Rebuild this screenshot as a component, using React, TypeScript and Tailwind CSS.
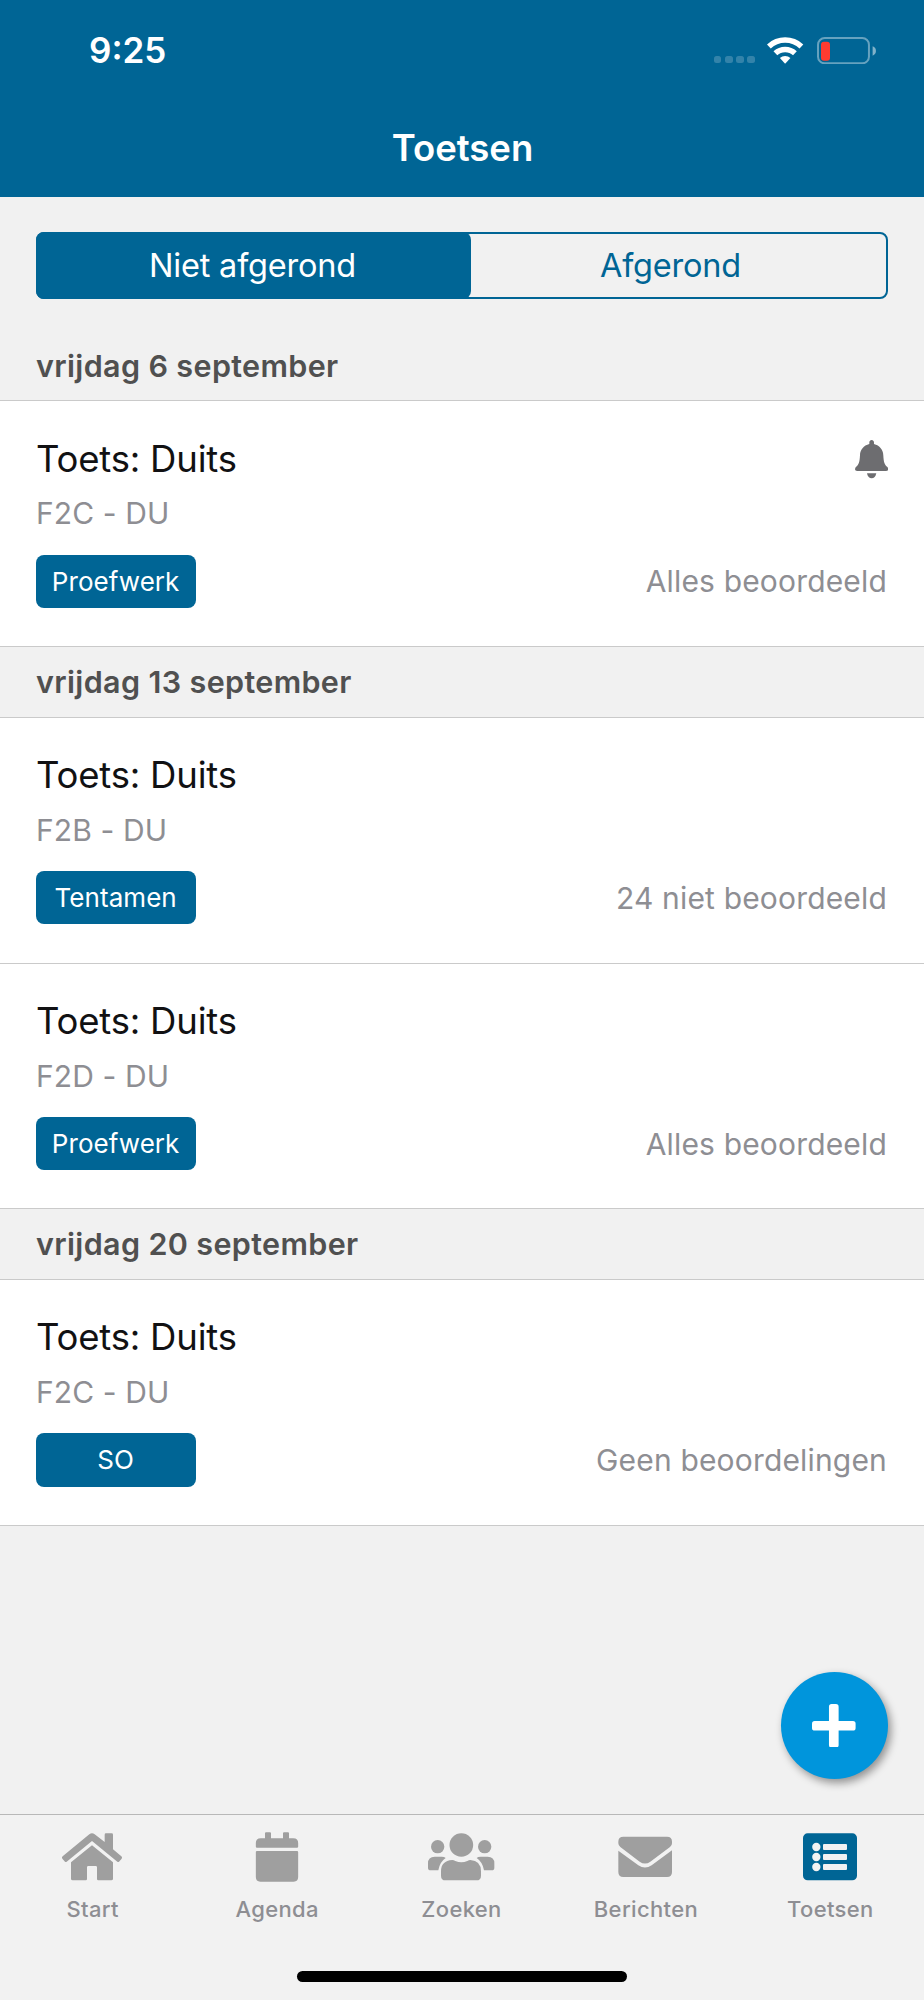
import { useState } from "react";
import type { ReactNode } from "react";

type TTest = {
  title: string;
  group: string;
  type: string;
  status: string;
  reminder?: boolean;
};

type TDay = {
  date: string;
  tests: TTest[];
};

const days: TDay[] = [
  {
    date: "vrijdag 6 september",
    tests: [
      { title: "Toets: Duits", group: "F2C - DU", type: "Proefwerk", status: "Alles beoordeeld", reminder: true },
    ],
  },
  {
    date: "vrijdag 13 september",
    tests: [
      { title: "Toets: Duits", group: "F2B - DU", type: "Tentamen", status: "24 niet beoordeeld" },
      { title: "Toets: Duits", group: "F2D - DU", type: "Proefwerk", status: "Alles beoordeeld" },
    ],
  },
  {
    date: "vrijdag 20 september",
    tests: [
      { title: "Toets: Duits", group: "F2C - DU", type: "SO", status: "Geen beoordelingen" },
    ],
  },
];

const WifiIcon = () => (
  <svg viewBox="0 0 109 80" className="h-[26.7px] w-[36.3px] fill-white">
    <path d="M0 22.1A79.5 79.5 0 0 1 109 22.1L97.7 34.1A63 63 0 0 0 11.3 34.1Z" />
    <path d="M19.5 42.9A51 51 0 0 1 89.5 42.9L78.2 54.9A34.5 34.5 0 0 0 30.8 54.9Z" />
    <path d="M38.7 63.3A23 23 0 0 1 70.3 63.3L56 78.8Q54.5 80.2 53 78.8Z" />
  </svg>
);

const BatteryIcon = () => (
  <svg viewBox="0 0 178 82" className="h-[27.3px] w-[59.3px]">
    <rect x="3" y="3" width="153" height="76" rx="20" fill="none" stroke="#fff" strokeOpacity="0.4" strokeWidth="6" />
    <rect x="12" y="14" width="27" height="57" rx="9" fill="#ff3b30" />
    <path d="M167 28Q177 32 177 42T167 56Z" fill="#fff" fillOpacity="0.5" />
  </svg>
);

const BellIcon = () => (
  <svg viewBox="0 0 100 115" className="h-[38.3px] w-[33.3px] fill-[#6d6d70]">
    <path d="M50 0C54 0 57 3 57 7V12C74 16 85 30 85 46C86 66 88 74 98 82Q101 87 99 91Q97 93 93 93H7Q3 93 1 91Q-1 87 2 82C12 74 14 66 15 46C15 30 26 16 43 12V7C43 3 46 0 50 0Z" />
    <path d="M36 100H64C62 110 57 115 50 115S38 110 36 100Z" />
  </svg>
);

// All tab icons share the same canvas so they line up in the bar
const TabIcon = ({ children }: { children: ReactNode }) => (
  <svg viewBox="-12 0 216 162" className="h-[54px] w-[72px]" fill="currentColor">
    {children}
  </svg>
);

const HomeIcon = () => (
  <TabIcon>
    <path d="M8 79Q4 82 7 86L15 95Q17 97 20 95L96 33L172 95Q175 97 177 95L185 86Q188 82 184 79L159 58V14Q159 10 155 10H138Q134 10 134 14V36L104 12.500Q96 7 88 12.500Z" />
    <path d="M33 97L96 46L159 97V146Q159 151 154 151H115Q111 151 111 147V112Q111 108 107 108H85Q81 108 81 112V147Q81 151 77 151H38Q33 151 33 146Z" />
  </TabIcon>
);

const CalendarIcon = () => (
  <TabIcon>
    <path d="M60 25V10Q60 7 63 7H75Q78 7 78 10V25H114V10Q114 7 117 7H129Q132 7 132 10V25H145Q159.500 25 159.500 39V50Q159.500 53 156 53H36Q32.500 53 32.500 50V39Q32.500 25 47 25Z" />
    <path d="M36 63H156Q159.500 63 159.500 66V141Q159.500 155 146 155H46Q32.500 155 32.500 141V66Q32.500 63 36 63Z" />
  </TabIcon>
);

const PeopleIcon = () => (
  <TabIcon>
    <circle cx="26" cy="50" r="20" />
    <circle cx="97" cy="45" r="35.5" />
    <circle cx="167" cy="50" r="20" />
    <path d="M17 80H38Q46 80 50 84Q32 96 28 121H5Q-3 121 -3 113V100Q-3 80 17 80Z" />
    <path d="M70 90Q74 90 79 93Q97 101 115 93Q120 90 124 90Q156 92 156 124V137Q156 151 142 151H50Q36 151 36 137V124Q36 92 70 90Z" />
    <path d="M176 80H155Q147 80 143 84Q161 96 165 121H188Q196 121 196 113V100Q196 80 176 80Z" />
  </TabIcon>
);

const MailIcon = () => (
  <TabIcon>
    <path d="M31 20H162Q177 20 177 35V40Q177 47 171 51L112 95Q96 106 80 95L22 51Q16 47 16 40V35Q16 20 31 20Z" />
    <path d="M16 62L76 106Q96 119 116 106L177 61V126Q177 141 162 141H31Q16 141 16 126Z" />
  </TabIcon>
);

const ListIcon = () => (
  <TabIcon>
    <rect x="15" y="10" width="162" height="141" rx="14" />
    <g className="fill-[#f2f2f2]">
      <circle cx="55" cy="51" r="12.5" />
      <circle cx="55" cy="81" r="12.5" />
      <circle cx="55" cy="111" r="12.5" />
      <rect x="75" y="42" width="72" height="18" rx="3" />
      <rect x="75" y="72" width="72" height="18" rx="3" />
      <rect x="75" y="102" width="72" height="18" rx="3" />
    </g>
  </TabIcon>
);

const tabs = [
  { label: "Start", icon: <HomeIcon /> },
  { label: "Agenda", icon: <CalendarIcon /> },
  { label: "Zoeken", icon: <PeopleIcon /> },
  { label: "Berichten", icon: <MailIcon /> },
  { label: "Toetsen", icon: <ListIcon /> },
];

const Header = () => (
  <header className="h-[197px] bg-[#006595] text-white">
    <div className="flex h-[101px] items-center justify-between pr-[48px] pl-[89px]">
      <span className="text-[35px] font-[570]">9:25</span>
      <div className="flex items-center">
        {/* No signal */}
        <div className="mt-[18px] flex gap-[3.500px]">
          <span className="size-[7.700px] rounded-[2.500px] bg-white/20" />
          <span className="size-[7.700px] rounded-[2.500px] bg-white/20" />
          <span className="size-[7.700px] rounded-[2.500px] bg-white/20" />
          <span className="size-[7.700px] rounded-[2.500px] bg-white/20" />
        </div>
        <div className="ml-[12.500px]">
          <WifiIcon />
        </div>
        <div className="ml-[13px]">
          <BatteryIcon />
        </div>
      </div>
    </div>
    <h1 className="pl-px text-center text-[36.500px] leading-[94px] font-semibold">Toetsen</h1>
  </header>
);

const TestRow = ({ test }: { test: TTest }) => (
  <li className="h-[245.800px] border-b border-[#cacaca] bg-white px-9 pt-[33px]">
    <div className="flex h-[50px] items-center justify-between">
      <h3 className="text-[36.500px] tracking-[-0.2px] text-[#111113]">{test.title}</h3>
      {test.reminder && <BellIcon />}
    </div>
    <p className="mt-[8px] text-[30px] leading-[43px] tracking-[0.1px] text-[#8e8e93]">{test.group}</p>
    <div className="mt-[19.400px] flex h-[53.300px] items-center justify-between">
      <span className="flex h-full w-[160.300px] items-center justify-center rounded-[8px] bg-[#006595] pr-[1px] text-[26px] tracking-[0.05px] text-white">
        {test.type}
      </span>
      <span className="pr-[1px] text-[30px] leading-[54px] tracking-[0.17px] text-[#8e8e93]">{test.status}</span>
    </div>
  </li>
);

const App = () => {
  const [activeTab] = useState("Toetsen");

  return (
    <div className="flex h-[2000px] w-[924px] flex-col overflow-hidden bg-[#f1f1f1] font-['Inter',sans-serif]">
      <Header />
      <main className="relative flex-1">
        <div className="mx-9 mt-[35px] flex h-[67px] rounded-[8px] border-2 border-[#006595] text-[32.500px] tracking-[-0.2px]">
          <button className="z-10 -my-[2px] -ml-[2px] w-[435px] shrink-0 rounded-[8px] bg-[#006595] pt-[2px] pr-[2px] text-white">
            Niet afgerond
          </button>
          <button className="-ml-[18px] w-[435px] shrink-0 pt-[2px] text-[#006595]">Afgerond</button>
        </div>

        <div className="mt-[31.950px]">
          {days.map((day) => (
            <section key={day.date}>
              <h2 className="h-[70.500px] border-b border-[#cacaca] px-9 text-[30.500px] leading-[70px] font-semibold tracking-[0.36px] text-[#505050]">
                {day.date}
              </h2>
              <ul>
                {day.tests.map((test, i) => (
                  <TestRow key={i} test={test} />
                ))}
              </ul>
            </section>
          ))}
        </div>

        <button className="absolute right-9 bottom-[35px] flex size-[107px] items-center justify-center rounded-full bg-[#0095dc] pr-[1.500px] shadow-[3px_4px_8px_rgba(0,0,0,0.4)]">
          <svg viewBox="0 0 131 131" className="size-[43.600px] fill-white">
            <rect x="51" width="29" height="131" rx="8" />
            <rect y="51" width="131" height="29" rx="8" />
          </svg>
        </button>
      </main>

      <nav className="h-[186px] border-t border-[#b8b8b8] bg-[#f2f2f2]">
        <div className="flex pt-[15px] pr-[2px]">
          {tabs.map((tab) => (
            <div
              key={tab.label}
              className={`flex flex-1 flex-col items-center ${activeTab === tab.label ? "text-[#006595]" : "text-[#9f9f9f]"}`}
            >
              {tab.icon}
              <span className="mt-[10px] pl-[1px] text-[22px] leading-[30px] font-medium tracking-[0.35px] text-[#8e8e93]">
                {tab.label}
              </span>
            </div>
          ))}
        </div>
        {/* Home indicator */}
        <div className="mx-auto mt-[47px] h-[11px] w-[330px] rounded-full bg-black" />
      </nav>
    </div>
  );
};

export default App;
